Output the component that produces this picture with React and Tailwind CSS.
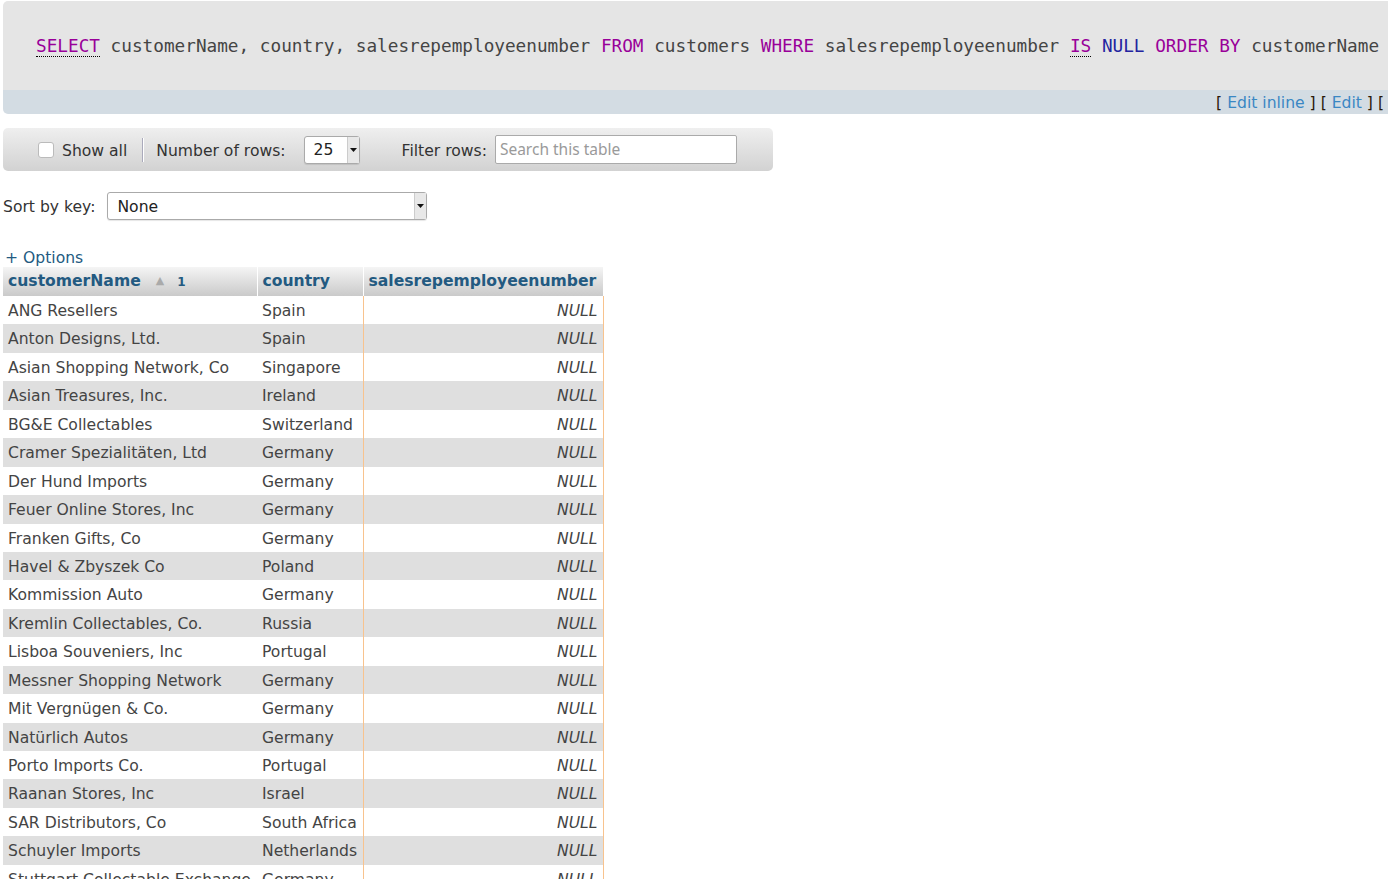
const ROWS = [
  ['ANG Resellers', 'Spain'],
  ['Anton Designs, Ltd.', 'Spain'],
  ['Asian Shopping Network, Co', 'Singapore'],
  ['Asian Treasures, Inc.', 'Ireland'],
  ['BG&E Collectables', 'Switzerland'],
  ['Cramer Spezialitäten, Ltd', 'Germany'],
  ['Der Hund Imports', 'Germany'],
  ['Feuer Online Stores, Inc', 'Germany'],
  ['Franken Gifts, Co', 'Germany'],
  ['Havel & Zbyszek Co', 'Poland'],
  ['Kommission Auto', 'Germany'],
  ['Kremlin Collectables, Co.', 'Russia'],
  ['Lisboa Souveniers, Inc', 'Portugal'],
  ['Messner Shopping Network', 'Germany'],
  ['Mit Vergnügen & Co.', 'Germany'],
  ['Natürlich Autos', 'Germany'],
  ['Porto Imports Co.', 'Portugal'],
  ['Raanan Stores, Inc', 'Israel'],
  ['SAR Distributors, Co', 'South Africa'],
  ['Schuyler Imports', 'Netherlands'],
  ['Stuttgart Collectable Exchange', 'Germany'],
  ['Warburg Exchange', 'Germany'],
]

function Kw({ children, doc }) {
  return (
    <span className={`text-[#990099] ${doc ? 'border-b border-dotted border-black' : ''}`}>{children}</span>
  )
}

function SelectBox({ value, width }) {
  return (
    <div className={`${width} h-[28px] bg-white border border-[#aaa] rounded-[3px] flex items-center justify-between shadow-[0_1px_1px_rgba(0,0,0,0.1)]`}>
      <span className="pl-[9px] pt-[3px] text-[#222]">{value}</span>
      <span className="h-full w-[12px] bg-[#e8e8e8] border-l border-[#ccc] flex items-center justify-center">
        <svg width="7" height="4" viewBox="0 0 7 4"><path d="M0 0h7L3.5 4z" fill="#111" /></svg>
      </span>
    </div>
  )
}

export default function App() {
  return (
    <div className="min-h-screen bg-white pl-[3px] pt-px overflow-hidden font-['DejaVu_Sans',sans-serif] text-[15.6px] text-[#444]">
      {/* sql query box */}
      <div className="w-[1385px] rounded-l-[5px] overflow-hidden">
        <div className="h-[89px] bg-[#e5e5e5] flex items-center pl-[33px] pt-[1px] whitespace-nowrap font-['DejaVu_Sans_Mono',monospace] text-[17.72px] text-[#444]">
          <span>
            <Kw doc>SELECT</Kw> customerName, country, salesrepemployeenumber <Kw>FROM</Kw> customers <Kw>WHERE</Kw> salesrepemployeenumber <Kw doc>IS</Kw> <span className="text-[#2323a0]">NULL</span> <Kw>ORDER</Kw> <Kw>BY</Kw> customerName
          </span>
        </div>
        <div className="h-[24px] bg-[#d3dce3] flex items-center justify-end pr-[4px] pt-[3px] whitespace-nowrap text-[#2a1a0a]">
          <span>
            [ <a className="text-[#3a87c3]">Edit inline</a> ] [ <a className="text-[#3a87c3]">Edit</a> ] [
          </span>
        </div>
      </div>

      {/* navigation bar */}
      <div className="mt-[14px] w-[770px] h-[43px] rounded-[5px] bg-gradient-to-b from-[#efefef] to-[#d2d2d2] flex items-center pl-[35px] text-[#333]">
        <span className="w-[16px] h-[16px] bg-white border border-[#bbb] rounded-[3px]" />
        <span className="ml-[8px] pt-[4px]">Show all</span>
        <span className="ml-[15px] w-px h-[24px] bg-[#aab] shadow-[1px_0_0_#fff]" />
        <span className="ml-[13px] pt-[4px]">Number of rows:</span>
        <div className="ml-[18px]"><SelectBox value="25" width="w-[56px]" /></div>
        <span className="ml-[42px] pt-[4px]">Filter rows:</span>
        <div className="ml-[8px] w-[242px] h-[29px] bg-white border border-[#aaa] rounded-[2px] flex items-center pl-[4px] pt-[1px] font-['Noto_Sans',sans-serif] text-[15.5px] text-[#9a9a9a]">
          Search this table
        </div>
      </div>

      {/* sort by key */}
      <div className="mt-[21px] flex items-center text-[#333]">
        <span className="pt-[4px]">Sort by key:</span>
        <div className="ml-[12px]"><SelectBox value="None" width="w-[320px]" /></div>
      </div>

      <div className="mt-[27px] h-[20px] leading-[20px] pt-[1px] pl-[2px] text-[#235a81]">+ Options</div>

      {/* results */}
      <table className="border-collapse">
        <thead>
          <tr className="h-[29px] bg-gradient-to-b from-[#f5f5f5] to-[#cacaca] text-[#235a81] font-bold text-left">
            <th className="w-[254px] px-[5px] border-r border-white">
              customerName
              <span className="ml-[15px] text-[11px] text-[#aaa] align-middle">▲</span>
              <span className="ml-[13px] text-[12px]">1</span>
            </th>
            <th className="w-[106px] px-[5px] border-r border-white">country</th>
            <th className="w-[240px] px-[5px]">salesrepemployeenumber</th>
          </tr>
        </thead>
        <tbody>
          {ROWS.map(([name, country], i) => (
            <tr key={name} className={`h-[28.45px] ${i % 2 ? 'bg-[#dfdfdf]' : 'bg-white'}`}>
              <td className="px-[5px] pt-[3px] whitespace-nowrap">{name}</td>
              <td className="px-[5px] pt-[3px] whitespace-nowrap">{country}</td>
              <td className="px-[5px] pt-[3px] text-right italic border-x border-[#f8c38e]">NULL</td>
            </tr>
          ))}
        </tbody>
      </table>
    </div>
  )
}
